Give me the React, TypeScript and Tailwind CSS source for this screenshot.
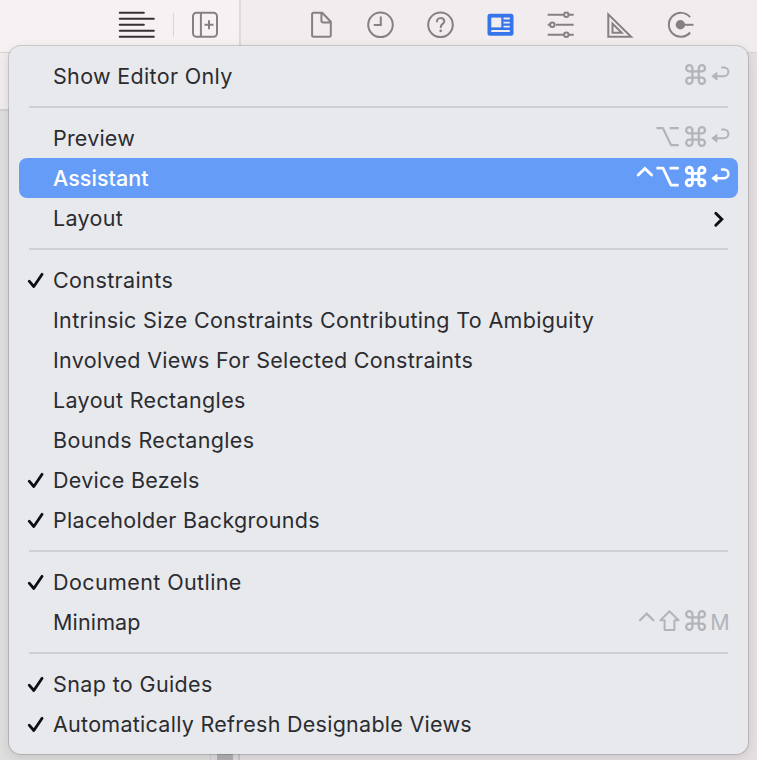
import type { ReactNode } from "react";

const FONT = "font-['Inter','Liberation_Sans',sans-serif]";

function Glyph({ width, stroke = 2, children }: { width: number; stroke?: number; children: ReactNode }) {
  return (
    <svg width={width} height="40" viewBox={`0 0 ${width} 40`} fill="none" stroke="currentColor" strokeWidth={stroke}>
      {children}
    </svg>
  );
}

const Command = ({ bold }: { bold?: boolean }) => (
  <Glyph width={27} stroke={bold ? 2.9 : 2.3}>
    <path d="M10.3 15.4H7.3a3.1 3.1 0 1 1 3.1-3.1v12.4a3.1 3.1 0 1 1-3.1-3.1h12.6a3.1 3.1 0 1 1-3.1 3.1V12.3a3.1 3.1 0 1 1 3.1 3.1H10" />
  </Glyph>
);

const Return = ({ bold }: { bold?: boolean }) => (
  <Glyph width={22} stroke={bold ? 2.5 : 2}>
    <path d="M7 20.2h8a4.4 4.4 0 0 0 0-8.8H13" strokeLinecap="round" />
    <path d="M7.8 16.7v7L3.2 20.2z" fill="currentColor" strokeWidth="1.2" strokeLinejoin="round" />
  </Glyph>
);

const Option = ({ bold }: { bold?: boolean }) => (
  <Glyph width={27} stroke={bold ? 2.7 : 2.2}>
    <path d="M1.4 10.2h6.6l8 16.9h7.7M14.6 10.2h9.2" strokeLinejoin="round" />
  </Glyph>
);

const Shift = () => (
  <Glyph width={27} stroke={2}>
    <path d="M14.5 9.3 5.4 18.3h4.2v9.6h9.8v-9.6h4.2z" strokeLinejoin="round" />
  </Glyph>
);

const Control = ({ bold }: { bold?: boolean }) => (
  <Glyph width={21} stroke={bold ? 2.9 : 2.3}>
    {bold ? (
      <path d="m4.2 17 6.7-6.5 6.7 6.5" strokeLinecap="round" />
    ) : (
      <path d="m6 18.2 6.7-6.6 6.7 6.6" strokeLinecap="round" />
    )}
  </Glyph>
);

const Check = () => (
  <Glyph width={34} stroke={2.8}>
    <path d="m10.2 21.2 4.6 5.3 8.3-12.2" strokeLinecap="round" strokeLinejoin="round" />
  </Glyph>
);

type RowProps = {
  label: string;
  tracking?: string;
  checked?: boolean;
  active?: boolean;
  shortcut?: ReactNode;
};

function Row({ label, tracking = "tracking-[0.3px]", checked, active, shortcut }: RowProps) {
  return (
    <div
      className={`flex h-10 items-center rounded-lg pr-[7px] ${active ? "bg-[#659cf8] text-white" : "text-[#2b2c30]"}`}
    >
      <div className="w-[34px] shrink-0 text-[#0d0e11]">{checked && <Check />}</div>
      <span className={`whitespace-nowrap text-[21.5px] leading-10 ${tracking} ${active ? "font-medium" : ""}`}>
        {label}
      </span>
      <div className={`ml-auto flex ${active ? "text-white" : "text-[#b3b4b8]"}`}>{shortcut}</div>
    </div>
  );
}

const Separator = () => (
  <div className="flex h-[22px] items-center px-[10px]">
    <div className="h-[2px] w-full bg-[#cfd0d4]" />
  </div>
);

function ToolbarIcon({ children }: { children: ReactNode }) {
  return (
    <svg width="60" height="50" viewBox="0 0 60 50" fill="none" stroke="#858183" strokeWidth="2">
      {children}
    </svg>
  );
}

function Toolbar() {
  return (
    <div className="flex h-[53px] border-b border-[#d8d4d6]">
      <div className="flex w-[241px] shrink-0 border-r-2 border-[#dedadc] bg-[#f6f2f4]">
        <svg
          className="ml-[110px]"
          width="60"
          height="50"
          viewBox="0 0 60 50"
          fill="none"
          stroke="#343033"
          strokeWidth="2.1"
          strokeLinecap="round"
        >
          <path d="M9.8 12.8h24M9.8 18.8h34M9.8 24.8h24M9.8 30.8h34M9.8 36.8h34" />
        </svg>
        <div className="mt-[13px] ml-[3px] h-6 w-px bg-[#d9d5d7]" />
        <svg className="ml-px" width="60" height="50" viewBox="0 0 60 50" fill="none" stroke="#858183" strokeWidth="2">
          <rect x="18" y="12.8" width="24" height="24" rx="3.5" />
          <path d="M25.9 13v24M29.5 24.8h9M34 20.3v9" />
        </svg>
      </div>
      <div className="flex grow bg-[#f1edef] pl-[50px]">
        <ToolbarIcon>
          <path
            d="M23 12.8h8.2l8.6 9v13.5q0 1.5-1.5 1.5H22.6q-1.5 0-1.5-1.5V14.3q0-1.5 1.5-1.5zM30.4 13v7.6q0 2 2 2h7"
            strokeLinejoin="round"
          />
        </ToolbarIcon>
        <ToolbarIcon>
          <circle cx="29.5" cy="24.8" r="12.3" />
          <path d="M29.8 16.5v8.5h-7" />
        </ToolbarIcon>
        <ToolbarIcon>
          <circle cx="29.5" cy="24.8" r="12.3" />
          <path d="M26 21.5c0-4.5 7.3-4.4 7.3-.3 0 2.8-3.6 2.6-3.6 6" strokeLinecap="round" />
          <circle cx="29.7" cy="30.8" r="1.4" fill="#858183" stroke="none" />
        </ToolbarIcon>
        <ToolbarIcon>
          <rect x="16.5" y="13.7" width="26" height="22" rx="2.5" fill="#3674ea" stroke="none" />
          <rect x="20.3" y="17.6" width="10" height="9.8" fill="#f1edef" stroke="none" />
          <path d="M32.5 18.5h6.3M32.5 22.6h6.3M32.5 26.6h6.3M20.3 31h18.5" stroke="#f1edef" strokeWidth="1.8" />
        </ToolbarIcon>
        <ToolbarIcon>
          <path d="M16.7 14.8h16M37.5 14.8h5.2M16.7 24.8h3M24.7 24.8h18M16.7 34.8h16M37.5 34.8h5.2" />
          <circle cx="35.3" cy="14.8" r="2.2" />
          <circle cx="21.3" cy="24.8" r="2.2" />
          <circle cx="35.3" cy="34.8" r="2.2" />
        </ToolbarIcon>
        <ToolbarIcon>
          <path d="M17.3 14.3v22.4h22.8zM21.5 23.6v9.2h9.2z" />
        </ToolbarIcon>
        <ToolbarIcon>
          <path d="M39.1 17.2A12 12 0 1 0 39.1 32.5" />
          <circle cx="29.4" cy="24.8" r="4.7" fill="#858183" stroke="none" />
          <path d="M33 24.8h9.5" />
        </ToolbarIcon>
      </div>
    </div>
  );
}

export default function App() {
  return (
    <div className={`relative flex h-[760px] w-[757px] flex-col overflow-hidden bg-[#e9e4e6] ${FONT}`}>
      <Toolbar />
      <div className="flex grow">
        <div className="flex w-[210px] flex-col">
          <div className="h-[58px] border-b-2 border-[#d4d0d2] bg-[#f1edef]" />
          <div className="grow bg-[#dfdedf]" />
        </div>
        <div className="w-[7px] border-l border-[#d0ccd0] bg-[#dedce0]" />
        <div className="w-4 bg-[#b3b0b4]" />
        <div className="w-[7px] border-r-2 border-[#cac6ca] bg-[#dedce0]" />
        <div className="grow bg-[#e5dfe2]" />
      </div>

      <div className="absolute top-[46px] left-[9px] h-[708px] w-[739px] rounded-[12px] bg-[#e8e9ed] p-[10px] shadow-[0_0_0_1px_rgba(0,0,0,0.14),0_3px_12px_rgba(0,0,0,0.12)]">
        <Row label="Show Editor Only" tracking="tracking-[0.33px]" shortcut={<><Command /><Return /></>} />
        <Separator />
        <Row label="Preview" tracking="tracking-[0.2px]" shortcut={<><Option /><Command /><Return /></>} />
        <Row
          label="Assistant"
          tracking="tracking-[0.05px]"
          active
          shortcut={<><Control bold /><Option bold /><Command bold /><Return bold /></>}
        />
        <Row
          label="Layout"
          shortcut={
            <span className="text-[#0d0e11]">
              <Glyph width={22} stroke={2.9}>
                <path d="m6.8 15.2 6 6-6 6" strokeLinecap="round" />
              </Glyph>
            </span>
          }
        />
        <Separator />
        <Row label="Constraints" tracking="tracking-[0.38px]" checked />
        <Row label="Intrinsic Size Constraints Contributing To Ambiguity" tracking="tracking-[0.335px]" />
        <Row label="Involved Views For Selected Constraints" />
        <Row label="Layout Rectangles" tracking="tracking-[0.35px]" />
        <Row label="Bounds Rectangles" tracking="tracking-[0.35px]" />
        <Row label="Device Bezels" checked />
        <Row label="Placeholder Backgrounds" checked />
        <Separator />
        <Row label="Document Outline" tracking="tracking-[0.4px]" checked />
        <Row
          label="Minimap"
          tracking="tracking-[0.15px]"
          shortcut={
            <>
              <Control />
              <Shift />
              <Command />
              <span className="w-[22px] text-center text-[21.5px] leading-10">M</span>
            </>
          }
        />
        <Separator />
        <Row label="Snap to Guides" tracking="tracking-[0.37px]" checked />
        <Row label="Automatically Refresh Designable Views" tracking="tracking-[0.27px]" checked />
      </div>
    </div>
  );
}
